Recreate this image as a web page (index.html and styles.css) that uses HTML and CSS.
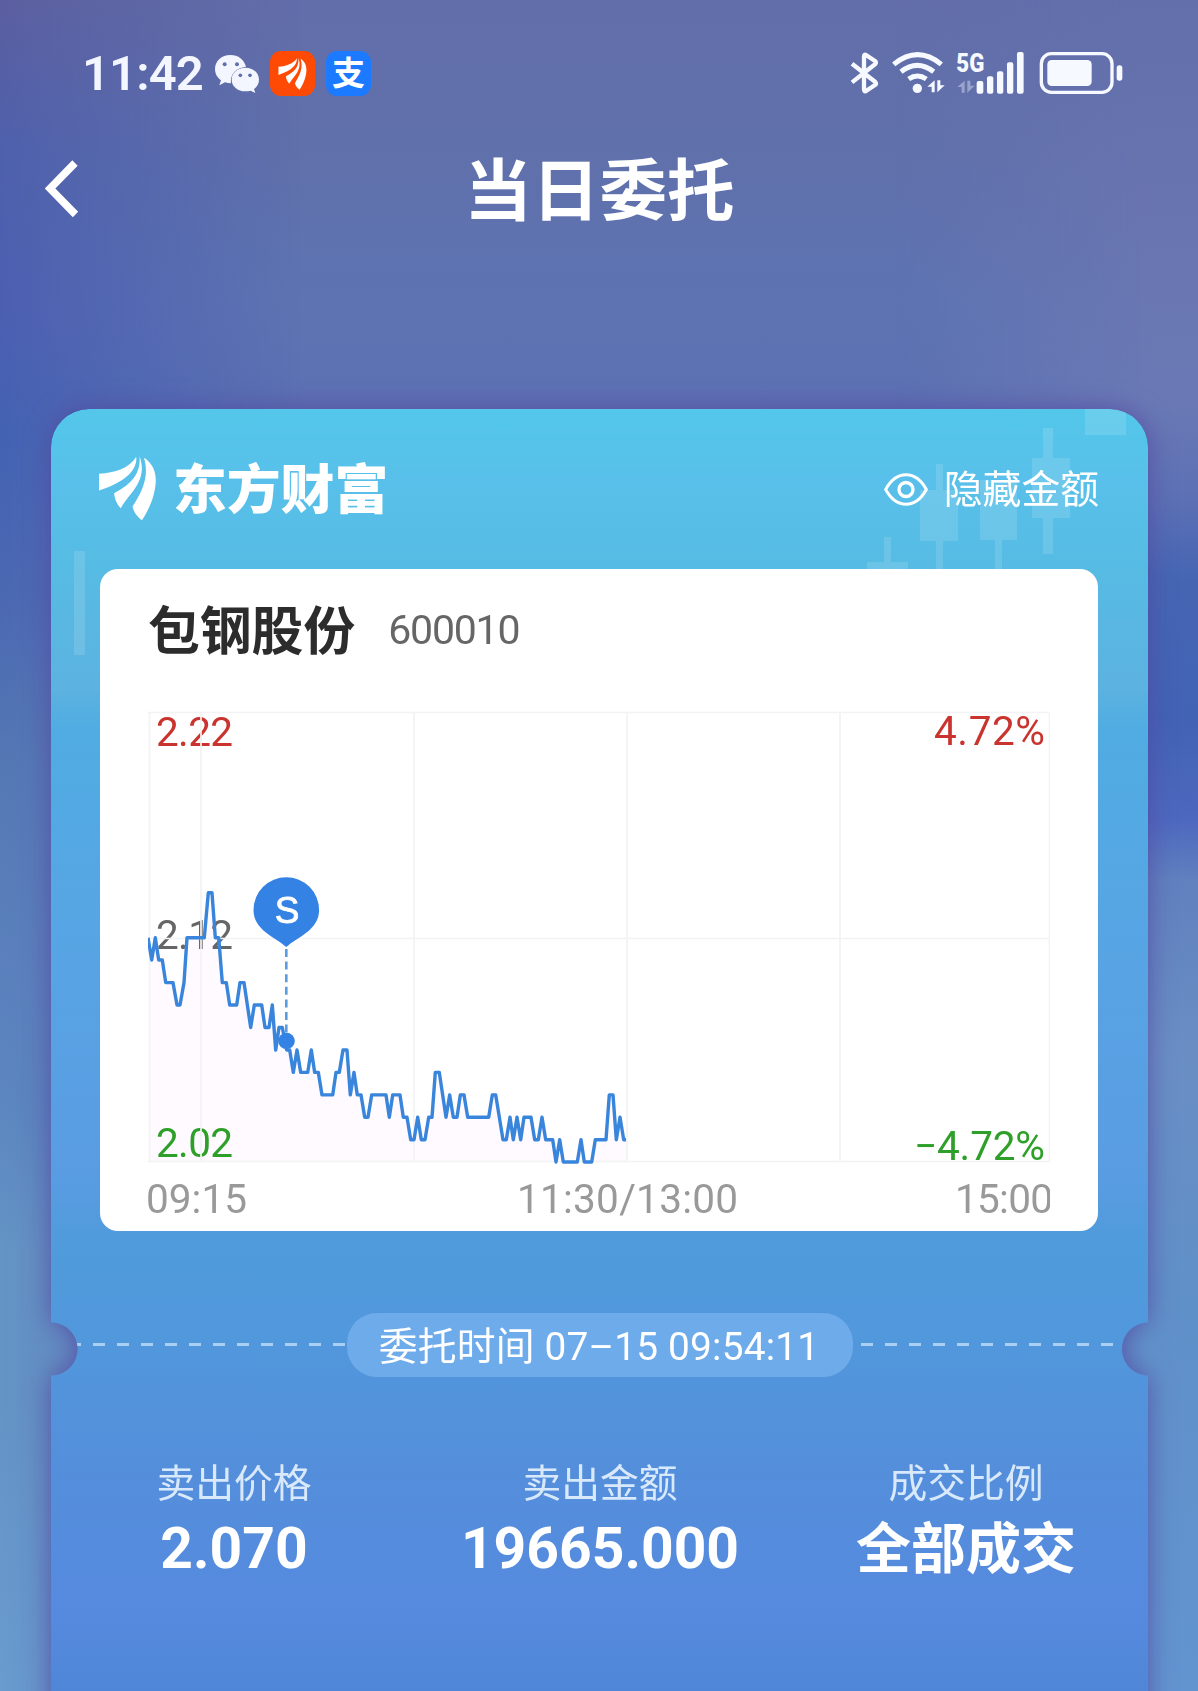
FILE: index.html
```html
<!DOCTYPE html>
<html lang="zh-CN">
<head>
  <title>当日委托</title>
  <meta charset="UTF-8">
  <link rel="stylesheet" href="styles.css">
</head>
<body>
  <div class="status-bar">
    <div class="status-left">
      <span class="clock">11:42</span>
      <svg class="wechat" viewBox="0 0 132 114">
        <path fill="#f3f6ff" d="M46 0C20 0 0 18 0 42c0 14 7 26 18 34l-5 15 17-9c6 2 12 3 18 3C44 58 64 38 93 35 88 14 70 0 46 0z"/>
        <path fill="#f3f6ff" d="M91 38c24 0 41 16 41 36 0 12-6 21-15 28l4 12-14-7c-5 1-10 2-16 2-23 0-41-15-41-35s18-36 41-36z"/>
        <g fill="#6070ad"><circle cx="29" cy="28" r="6"/><circle cx="66" cy="28" r="6"/><circle cx="76" cy="61" r="5.5"/><circle cx="105" cy="61" r="5.5"/></g>
      </svg>
      <span class="app app-orange">
        <svg viewBox="177 168 170 194"><use href="#wing"/></svg>
      </span>
      <span class="app app-blue">支</span>
    </div>
    <div class="status-right">
      <svg class="bluetooth" viewBox="90 60 90 140">
        <path d="M96 101 166 156q4 5-1 9L138 183q-6 3-6-5V80q0-8 6-5l27 18q5 4 1 9L96 157" fill="none" stroke="#f6f9ff" stroke-width="13" stroke-linejoin="round"/>
      </svg>
      <svg class="wifi" viewBox="215 60 165 140">
        <g fill="none" stroke="#f6f9ff" stroke-width="15">
          <path d="M223 103q72-58 143 0"/>
          <path d="M245 125q49-38 98 0"/>
          <path d="M268 147q26-18 53 0"/>
        </g>
        <circle cx="294" cy="175" r="14" fill="#f6f9ff"/>
        <path id="updown" fill="#f6f9ff" d="M346 151v36h-9v-17h-13zM354 187v-36h9v15h13z"/>
      </svg>
      <svg class="signal" viewBox="408 60 208 140">
        <text x="409" y="127" font-size="80" font-weight="900" textLength="84" lengthAdjust="spacingAndGlyphs" fill="#f6f9ff">5G</text>
        <use href="#updown" x="88" y="1" opacity=".38"/>
        <g fill="#f6f9ff">
          <rect x="470" y="153" width="20" height="38" rx="6"/>
          <rect x="501" y="139" width="19" height="52" rx="6"/>
          <rect x="531" y="124" width="19" height="67" rx="6"/>
          <rect x="561" y="97" width="19" height="94" rx="6"/>
          <rect x="591" y="66" width="20" height="125" rx="6"/>
        </g>
      </svg>
      <svg class="battery" viewBox="658 60 252 140">
        <rect x="665" y="71" width="212" height="116" rx="30" fill="none" stroke="#f6f9ff" stroke-width="10"/>
        <rect x="683" y="90" width="133" height="78" rx="13" fill="#f6f9ff"/>
        <rect x="891" y="106" width="17" height="46" rx="8" fill="#f6f9ff"/>
      </svg>
    </div>
  </div>

  <div class="nav">
    <svg class="back" viewBox="0 0 34 58"><path d="M30 3 5 28.500 30.500 54.500" fill="none" stroke="#fff" stroke-width="7.500"/></svg>
    <h1>当日委托</h1>
  </div>

  <div class="ticket-shadow">
    <div class="ticket">
      <svg class="candles" viewBox="0 0 1097 260">
        <path d="M1034 0h41v26h-41zM992 19h10v30h17v60h-17v36h-10v-36h-11V49h11zM929 71h37v60h-15v29h-7v-29h-15zM885 55h7v26h15v51h-15v28h-7v-28h-16V81h16zM833 128h7v25h17v8h-41v-8h17zM23 142h11v104H23z"/>
      </svg>

      <div class="ticket-head">
        <div class="brand">
          <svg viewBox="177 168 170 194">
            <g id="wing" fill="#fff">
              <path d="M177 221C225 218 268 204 288 170 292 206 262 243 177 271z"/>
              <path d="M298 168C313 212 303 244 270 284 257 300 250 310 242 324 231 313 223 295 222 279 268 255 303 225 298 168z"/>
              <path d="M311 173C335 188 349 214 346 250 343 290 325 330 305 360 292 350 281 338 277 319 307 272 328 228 311 173z"/>
            </g>
          </svg>
          <span>东方财富</span>
        </div>
        <div class="hide-amount">
          <svg viewBox="0 0 132 98" fill="none" stroke="#fff">
            <path d="M5 49Q29 5 66 5t61 44Q103 93 66 93T5 49z" stroke-width="9"/>
            <circle cx="66" cy="49" r="21" stroke-width="10"/>
          </svg>
          <span>隐藏金额</span>
        </div>
      </div>

      <div class="panel">
        <div class="stock">
          <b>包钢股份</b>
          <span>600010</span>
        </div>
        <svg class="chart" viewBox="0 0 902 510" font-size="40.500">
          <path fill="#fefaff" d="M1.500 226.700 3.700 249 7.300 226.700 10.700 249h3.600L17.700 271.600H25L29 294h3L36 271.600 39 226.700H56.300L60.300 181.800H64L67.300 226.700h3.400L74.300 271.600h4L81.700 294h7L92 271.600h4L102.700 316.500 106.300 294h7.400L117 316.500h4L124.300 294 127.700 339 131 316.500h3.300L138.700 339h3L145.300 361.400 149 339 152.700 361.400h7L163.300 339 166.700 361.400h3.600L174 383.900h10.700L188 361.400h3.300L195 339h4L202.300 383.900 206 361.400 209.300 383.900H213L216.700 406.300H220L223.700 383.900H238L241.300 406.300 244.700 383.900H252L255.300 406.300H259L262.700 428.700H266L269.700 406.300 273.300 428.700H277L280.700 406.300H284L287.300 361.400h4L298 406.300 301.700 383.900 305.300 406.300H309L312.300 383.900H316L319.700 406.300h21L344.300 383.900h3.400L355 428.700H358.300L362 406.300 365.300 428.700 369 406.300 372.700 428.700 376 406.300h7L386.700 428.700H390.300L394 406.300 397.700 428.700h7L408 451 411.700 428.700 415.300 451h14L433 428.700 436.300 451h7.400L447.300 428.700H458L461.300 383.900H465L468.300 428.700 472 406.300 475.700 428.700H478V451H1.500z"/>
          <text x="8" y="35" fill="#c9342f" textLength="77">2.22</text>
          <text x="8" y="238" fill="#666" textLength="77">2.12</text>
          <text x="8" y="446" fill="#2ea02a" textLength="77">2.02</text>
          <text x="786" y="34" fill="#c9342f" textLength="111">4.72%</text>
          <text x="766" y="449" fill="#2ea02a" textLength="131">−4.72%</text>
          <g fill="#999">
            <text x="-2" y="502" textLength="101">09:15</text>
            <text x="369" y="502" textLength="221">11:30/13:00</text>
            <text x="807" y="502" textLength="98">15:00</text>
          </g>
          <path class="grid" d="M0 1.500H902M0 227.500H902M0 450.500H902M1.500 1V451M53 1V451M266 1V451M479 1V451M692 1V451M901.500 1V451"/>
          <polyline class="price" points="0,226.700 3.700,249 7.300,226.700 10.700,249 14.300,249 17.700,271.600 25,271.600 29,294 32,294 36,271.600 39,226.700 56.300,226.700 60.300,181.800 64,181.800 67.300,226.700 70.700,226.700 74.300,271.600 78.300,271.600 81.700,294 88.700,294 92,271.600 96,271.600 102.700,316.500 106.300,294 113.700,294 117,316.500 121,316.500 124.300,294 127.700,339 131,316.500 134.300,316.500 138.700,339 141.700,339 145.300,361.400 149,339 152.700,361.400 159.700,361.400 163.300,339 166.700,361.400 170.300,361.400 174,383.900 184.700,383.900 188,361.400 191.300,361.400 195,339 199,339 202.300,383.900 206,361.400 209.300,383.900 213,383.900 216.700,406.300 220,406.300 223.700,383.900 238,383.900 241.300,406.300 244.700,383.900 252,383.900 255.300,406.300 259,406.300 262.700,428.700 266,428.700 269.700,406.300 273.300,428.700 277,428.700 280.700,406.300 284,406.300 287.300,361.400 291.300,361.400 298,406.300 301.700,383.900 305.300,406.300 309,406.300 312.300,383.900 316,383.900 319.700,406.300 340.700,406.300 344.300,383.900 347.700,383.900 355,428.700 358.300,428.700 362,406.300 365.300,428.700 369,406.300 372.700,428.700 376,406.300 383,406.300 386.700,428.700 390.300,428.700 394,406.300 397.700,428.700 404.700,428.700 408,451 411.700,428.700 415.300,451 429.300,451 433,428.700 436.300,451 443.700,451 447.300,428.700 458,428.700 461.300,383.900 465,383.900 468.300,428.700 472,406.300 475.700,428.700 478,428.700"/>
          <path d="M138.300 238V324" stroke="#5b9be0" stroke-width="2.600" stroke-dasharray="8 4.600"/>
          <circle cx="138.500" cy="330" r="8.300" fill="#3482e3"/>
          <path fill="#3482e3" d="M138.300 236C127 226 105.500 219 105.500 199a32.800 32.800 0 0 1 65.600 0C171.100 219 149.600 226 138.300 236z"/>
          <text class="pin-label" x="139" y="212" text-anchor="middle">S</text>
        </svg>
      </div>

      <div class="divider">
        <span>委托时间 07–15 09:54:11</span>
      </div>

      <div class="stats">
        <div class="stat">
          <label>卖出价格</label>
          <strong>2.070</strong>
        </div>
        <div class="stat">
          <label>卖出金额</label>
          <strong>19665.000</strong>
        </div>
        <div class="stat">
          <label>成交比例</label>
          <strong class="text">全部成交</strong>
        </div>
      </div>
    </div>
  </div>
</body>
</html>
```

FILE: styles.css
```css
* {
  box-sizing: border-box;
}
body {
  font-family: Roboto, "Noto Sans CJK SC", sans-serif;
  margin: 0;
  height: 1691px;
  display: flex;
  flex-direction: column;
  overflow: hidden;
  position: relative;
  z-index: 0;
  color: #ffffff;
  background: linear-gradient(#626eaa, #6070ab 150px, #5d74b2 300px, #5c70b2 420px);
}
svg {
  display: block;
  flex-shrink: 0;
}
/* tinted screen edges */
body::before,
body::after {
  content: "";
  position: absolute;
  top: 0;
  bottom: 0;
  z-index: -1;
}
body::before {
  left: 0;
  width: 300px;
  background: linear-gradient(#5b5fa0, #4e60ac 150px, #4b5fb2 330px, #4362b2 440px, #4b68b2 600px, #5478b4 760px, #5a80bc 950px, #5c88c0 1120px, #6494c5 1250px, #6494c6 1400px, #699ccf);
  -webkit-mask: linear-gradient(to right, #000, rgba(0, 0, 0, .8) 50px, transparent);
  mask: linear-gradient(to right, #000, rgba(0, 0, 0, .8) 50px, transparent);
}
body::after {
  right: 0;
  width: 300px;
  background: linear-gradient(#626fab, #6874b0 200px, #6a79b5 400px, #5c70b4 500px, #4565b3 580px, #4262b4 720px, #4d68bf 820px, #6080be 880px, #6a8ec4 1050px, #6090c8 1300px, #6294d0);
  -webkit-mask: linear-gradient(to left, #000, #000 50px, transparent);
  mask: linear-gradient(to left, #000, #000 50px, transparent);
}

/* status bar */
.status-bar {
  height: 148px;
  flex-shrink: 0;
  padding: 0 76px 1px 82px;
  display: flex;
  align-items: center;
  justify-content: space-between;
}
.status-left,
.status-right {
  display: flex;
  align-items: center;
}
.clock {
  width: 133px;
  font-size: 49px;
  font-weight: 600;
  letter-spacing: -0.9px;
  color: #f3f6ff;
}
.wechat {
  width: 44px;
  height: 38px;
  margin-right: 11px;
}
.app {
  width: 45px;
  height: 45px;
  border-radius: 11px;
  display: flex;
  align-items: center;
  justify-content: center;
}
.app-orange {
  background: #ff4a05;
  margin-right: 11px;
}
.app-orange svg {
  width: 29px;
  height: 32px;
}
.app-blue {
  background: #1b7aff;
  font-size: 33px;
  font-weight: 700;
  line-height: 45px;
}
.status-right svg {
  height: 46.7px;
}
.bluetooth {
  width: 30px;
  margin-right: 11.7px;
}
.wifi {
  width: 55px;
  margin-right: 9.3px;
}
.signal {
  width: 69.3px;
  margin-right: 14px;
}
.battery {
  width: 84px;
  margin-right: -1px;
}

/* title bar */
.nav {
  height: 84px;
  flex-shrink: 0;
  padding-left: 45px;
  display: flex;
  align-items: center;
}
.back {
  width: 34px;
  height: 58px;
  margin-top: -2px;
}
.nav h1 {
  flex: 1;
  margin: 0;
  padding: 4px 78px 0 0;
  text-align: center;
  font-size: 67.6px;
  font-weight: 700;
  line-height: 84px;
}

/* ticket */
.ticket-shadow {
  flex-shrink: 0;
  margin: 177px 50px 0 51px;
  filter: drop-shadow(0 0 13px rgba(84, 70, 160, 0.8));
}
.ticket {
  position: relative;
  height: 1320px;
  padding: 0 50px 0 49px;
  border-radius: 38px 38px 0 0;
  background: linear-gradient(#53c7ea, #58c0ea 70px, #56bce4 150px, #5cb2e0 280px, #50ace2 320px, #57a5e4 520px, #5a9ce2 760px, #4f9bdb 840px, #5198dc 920px, #548fdb 1050px, #568adf 1200px, #4f86d6 1290px);
  -webkit-mask: radial-gradient(circle at 0 940px, transparent 26px, #000 27px) left / 51% 100% no-repeat, radial-gradient(circle at 100% 940px, transparent 26px, #000 27px) right / 50% 100% no-repeat;
  mask: radial-gradient(circle at 0 940px, transparent 26px, #000 27px) left / 51% 100% no-repeat, radial-gradient(circle at 100% 940px, transparent 26px, #000 27px) right / 50% 100% no-repeat;
}
.candles {
  position: absolute;
  left: 0;
  top: 0;
  width: 1097px;
  height: 260px;
  fill: rgba(255, 255, 255, 0.13);
}
.ticket-head {
  position: relative;
  height: 160px;
  display: flex;
  align-items: center;
  justify-content: space-between;
}
.brand {
  display: flex;
  align-items: center;
  font-size: 53.8px;
  font-weight: 900;
  line-height: 60px;
}
.brand svg {
  width: 57px;
  height: 65px;
  margin: -2px 17px 0 -1px;
}
.brand span {
  padding-top: 3px;
}
.hide-amount {
  display: flex;
  align-items: center;
  margin-right: -1px;
  font-size: 38.8px;
  line-height: 50px;
}
.hide-amount svg {
  width: 44px;
  height: 33px;
  margin-right: 16px;
}
.hide-amount span {
  padding-top: 2px;
}

/* stock panel */
.panel {
  position: relative;
  height: 662px;
  padding: 0 48px;
  border-radius: 18px;
  background: #ffffff;
}
.stock {
  height: 124px;
  display: flex;
  align-items: center;
  color: #2c2c2c;
}
.stock b {
  font-size: 51.8px;
  line-height: 60px;
  padding-top: 4px;
  margin-right: 33px;
}
.stock span {
  font-size: 41px;
  letter-spacing: -1.2px;
  margin-top: -2px;
  color: #666666;
}
.chart {
  width: 902px;
  height: 510px;
  margin-top: 18px;
}
.grid {
  fill: none;
  stroke: #f3f2f4;
  stroke-width: 1.7;
}
.price {
  fill: none;
  stroke: #3a85dc;
  stroke-width: 3.4;
  stroke-linejoin: round;
}
.pin-label {
  font: 37px "Liberation Sans", Arial, sans-serif;
  fill: #ffffff;
  stroke: #ffffff;
  stroke-width: 0.8;
}

/* perforation line */
.divider {
  height: 64px;
  margin: 82px -15px 0 -31px;
  display: flex;
  justify-content: center;
  background: repeating-linear-gradient(to right, #a9d0f3 0 12px, transparent 12px 24px) 0 30px / 100% 3px no-repeat;
}
.divider span {
  width: 506px;
  height: 64px;
  margin-left: 18px;
  padding-right: 2px;
  border-radius: 30px;
  background: #6eabeb;
  text-align: center;
  font-size: 38.8px;
  line-height: 67px;
  letter-spacing: 0.2px;
  white-space: nowrap;
}

/* order totals */
.stats {
  margin: 82px -51px 0 -49px;
  display: flex;
}
.stat {
  flex: 1;
  display: flex;
  flex-direction: column;
  align-items: center;
}
.stat label {
  font-size: 38.8px;
  line-height: 50px;
  color: #d9e9fc;
}
.stat strong {
  margin-top: 7px;
  font-size: 57px;
  font-weight: 700;
  line-height: 66px;
}
.stat .text {
  font-size: 55px;
}
```
